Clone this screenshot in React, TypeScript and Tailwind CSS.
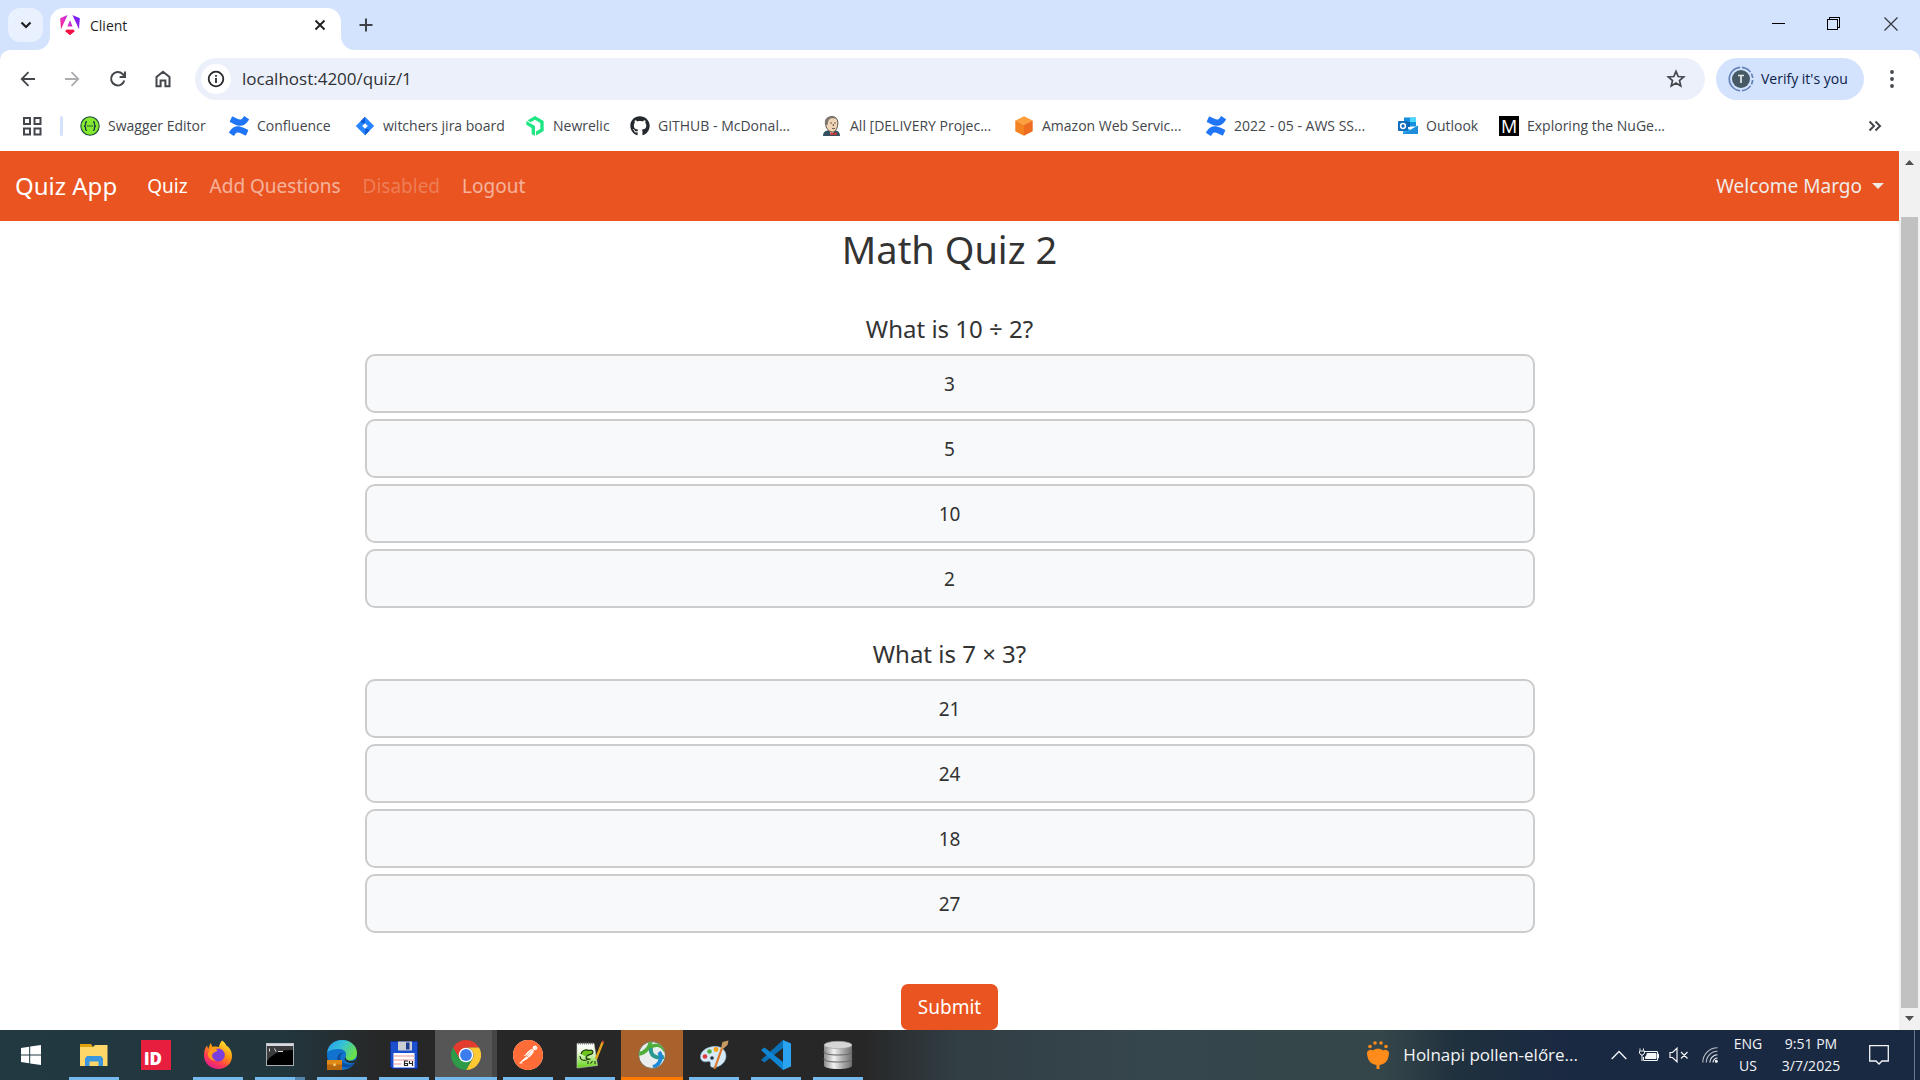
import React from "react";
import { FaGithub } from "react-icons/fa";
import { SiConfluence, SiNewrelic, SiPostman } from "react-icons/si";

/* ---------- Bookmark icons ---------- */

const AngularIcon = () => (
  <svg viewBox="0 0 20 20" className="size-5 shrink-0">
    <defs>
      <linearGradient id="ng" x1="0" y1="1" x2="1" y2="0.3">
        <stop offset="0" stopColor="#f0184e" />
        <stop offset="0.45" stopColor="#ee2ec4" />
        <stop offset="1" stopColor="#6e1cf7" />
      </linearGradient>
    </defs>
    <path
      fill="url(#ng)"
      d="M12.4 0 19.8 3.2 19 14.2ZM7.6 0 .2 3.2 1 14.2ZM14.6 16.2 10 19.9 5.4 16.2 6.3 14.7H13.7ZM7.4 11.6 10 5.3 12.6 11.6Z"
    />
    <path fill="#f5123f" d="M14.6 16.2 10 19.9 5.4 16.2 6.3 14.7H13.7Z" />
  </svg>
);

const SwaggerIcon = () => (
  <svg viewBox="0 0 20 20" className="size-5 shrink-0">
    <circle cx="10" cy="10" r="9.2" fill="#85ea2d" stroke="#1f4d3c" strokeWidth="1.1" />
    <g fill="none" stroke="#173647" strokeWidth="1.3">
      <path d="M7 5.6C5.4 5.6 5.6 6.8 5.6 8s-.2 1.8-1.4 2c1.2.2 1.4.8 1.4 2s-.2 2.4 1.4 2.4" />
      <path d="M13 5.6c1.6 0 1.4 1.2 1.4 2.4s.2 1.8 1.4 2c-1.2.2-1.4.8-1.4 2s.2 2.4-1.4 2.4" />
    </g>
    <g fill="#173647">
      <circle cx="7.9" cy="10" r=".8" />
      <circle cx="10" cy="10" r=".8" />
      <circle cx="12.1" cy="10" r=".8" />
    </g>
  </svg>
);

const ConfluenceIcon = () => <SiConfluence className="size-5 shrink-0 text-[#1f75f5]" />;

const JiraIcon = () => (
  <svg viewBox="0 0 20 20" className="size-5 shrink-0">
    <path d="M10 .8 19.2 10 10 19.2.8 10Z" fill="#2684ff" />
    <path d="M10 .8 5.9 5c0 2 1.6 2.6 4.1 2.2Z" fill="#0f5bd6" />
    <path d="M10 19.2 14.1 15c0-2-1.6-2.6-4.1-2.2Z" fill="#0f5bd6" />
    <path d="M10 7.2 12.8 10 10 12.8 7.2 10Z" fill="#fff" />
  </svg>
);

const NewrelicIcon = () => <SiNewrelic className="size-5 shrink-0 text-[#1ce783]" />;
const GithubIcon = () => <FaGithub className="size-5 shrink-0 text-[#24292f]" />;

const JenkinsIcon = () => (
  <svg viewBox="0 0 20 20" className="size-5 shrink-0">
    <path d="M1 20c0-3.5 1.5-5 4.5-5.5h8c3 .5 4.500 2 4.500 5.500Z" fill="#335061" />
    <path d="M7 13.5 9 19l4-4.5Z" fill="#fff" />
    <path d="M3.5 8C3 3 6 .6 10 .6s6.200 2.800 5.800 7.400c-.3 4.500-2.300 8-5.500 8S4 12.500 3.500 8Z" fill="#f0d6b7" stroke="#4a4038" strokeWidth=".9" />
    <path d="M3.200 9C1.800 3.500 5 .4 10 .4c3 0 4.600 1.200 5.300 2.800-3-1.200-6.300-1.500-8 .3-1.200 1.300-1.300 3-1.800 5.500Z" fill="#7d7970" />
    <path d="M8.300 7h1.600M12.300 7h1.500M10 12.200c1 .6 2 .6 3 0M11.300 8v2" stroke="#3b3029" strokeWidth=".9" fill="none" />
    <path d="m8.500 16 3 1.300 3-1.300v3.600l-3-1.200-3 1.200Z" fill="#d33833" />
  </svg>
);

const AwsIcon = () => (
  <svg viewBox="0 0 20 20" className="size-5 shrink-0">
    <path d="m10 .3 8.700 4.200L10 8.700 1.300 4.500Z" fill="#fba03c" />
    <path d="M1.300 4.500 10 8.700v11l-8.700-4.400Z" fill="#f58220" />
    <path d="M18.700 4.500 10 8.700v11l8.700-4.400Z" fill="#ee6b1f" />
  </svg>
);

const OutlookIcon = () => (
  <svg viewBox="0 0 20 20" className="size-5 shrink-0">
    <path d="M6 1.500h12v9H6Z" fill="#1490df" />
    <path d="M12 1.500h6v4.500h-6Z" fill="#50d9ff" />
    <path d="M6 6h6v5H6Z" fill="#0364b8" />
    <path d="M5 9.500 12.500 14 20 9.500V18H5Z" fill="#28a8ea" />
    <path d="m5 18 15-8.500V18Z" fill="#1f8fdc" />
    <rect x="0" y="5" width="10" height="10" rx="1" fill="#0f6cbd" />
    <circle cx="5" cy="10" r="2.4" fill="none" stroke="#fff" strokeWidth="1.5" />
  </svg>
);

const MediumIcon = () => (
  <span className="flex size-5 shrink-0 items-center justify-center bg-black text-lg leading-5 text-white">M</span>
);

const bookmarks = [
  { label: "Swagger Editor", icon: SwaggerIcon, width: "w-[121px]" },
  { label: "Confluence", icon: ConfluenceIcon, width: "w-[98px]" },
  { label: "witchers jira board", icon: JiraIcon, width: "w-[142px]" },
  { label: "Newrelic", icon: NewrelicIcon, width: "w-[77px]" },
  { label: "GITHUB - McDonal...", icon: GithubIcon, width: "w-[164px]" },
  { label: "All [DELIVERY Projec...", icon: JenkinsIcon, width: "w-[164px]" },
  { label: "Amazon Web Servic...", icon: AwsIcon, width: "w-[164px]" },
  { label: "2022 - 05 - AWS SS...", icon: ConfluenceIcon, width: "w-[164px]" },
  { label: "Outlook", icon: OutlookIcon, width: "w-[73px]" },
  { label: "Exploring the NuGe...", icon: MediumIcon, width: "w-[164px]" },
];

/* ---------- Browser chrome ---------- */

function TabStrip() {
  return (
    <div className="flex h-[50px] shrink-0 items-start bg-[#d3e2fd] text-[#1f1f1f]">
      <button aria-label="Search tabs" className="mt-2 ml-2 flex h-[34px] w-[35px] items-center justify-center rounded-xl bg-[#e9f0fe]">
        <svg viewBox="0 0 12 12" className="size-3" fill="none" stroke="currentColor" strokeWidth="2.2">
          <path d="m1.500 3.500 4.500 4.500 4.500-4.500" />
        </svg>
      </button>
      <div className="relative mt-2 ml-[7px] flex h-[42px] w-[291px] items-start rounded-t-[14px] bg-white pt-[7px] pr-[11px] pl-[10px]">
        <svg viewBox="0 0 14 14" className="absolute bottom-0 -left-[14px] size-[14px] fill-white">
          <path d="M14 0v14H0C8 14 14 8 14 0Z" />
        </svg>
        <svg viewBox="0 0 14 14" className="absolute -right-[14px] bottom-0 size-[14px] fill-white">
          <path d="M0 0v14h14C6 14 0 8 0 0Z" />
        </svg>
        <AngularIcon />
        <span className="ml-[10px] flex-1 text-[14px] leading-[22px]">Client</span>
        <button aria-label="Close tab" className="flex size-5 items-center justify-center">
          <svg viewBox="0 0 12 12" className="size-3" stroke="currentColor" strokeWidth="1.9">
            <path d="m1.500 1.500 9 9M10.500 1.500l-9 9" />
          </svg>
        </button>
      </div>
      <button aria-label="New tab" className="mt-[15px] ml-[15px] flex size-5 items-center justify-center">
        <svg viewBox="0 0 14 14" className="size-[14px]" stroke="#3f4247" strokeWidth="2">
          <path d="M7 .5v13M.5 7h13" />
        </svg>
      </button>
      <div className="ml-auto flex h-12 items-center text-black">
        <button aria-label="Minimize" className="flex h-full w-14 items-center justify-center">
          <svg viewBox="0 0 14 14" className="size-[14px]" stroke="currentColor" shapeRendering="crispEdges">
            <path d="M.5 6.500h13" />
          </svg>
        </button>
        <button aria-label="Restore" className="flex h-full w-14 items-center justify-center">
          <svg viewBox="0 0 14 14" className="size-[14px]" fill="none" stroke="currentColor" shapeRendering="crispEdges">
            <path d="M.5 2.500h10v10H.5ZM2.500 2V.5h10v10H11" />
          </svg>
        </button>
        <button aria-label="Close" className="flex h-full w-[58px] items-center justify-center">
          <svg viewBox="0 0 14 14" className="size-[14px]" stroke="#33373d" strokeWidth="1.2">
            <path d="m.5.5 13 13M13.500.5l-13 13" />
          </svg>
        </button>
      </div>
    </div>
  );
}

function Toolbar() {
  return (
    <div className="bg-[#d3e2fd]">
      <div className="flex h-[58px] items-center rounded-t-[10px] bg-white pl-[18px] text-[#43474c]">
        <button aria-label="Back" className="size-5">
          <svg viewBox="0 0 20 20" fill="none" stroke="currentColor" strokeWidth="1.8">
            <path d="M17 10H4M10.500 3.200 3.700 10l6.800 6.800" />
          </svg>
        </button>
        <button aria-label="Forward" className="ml-6 size-5 text-[#abadb0]">
          <svg viewBox="0 0 20 20" fill="none" stroke="currentColor" strokeWidth="1.8">
            <path d="M3 10h13M9.500 3.200l6.800 6.800-6.800 6.800" />
          </svg>
        </button>
        <button aria-label="Reload" className="ml-[26px] size-5">
          <svg viewBox="0 0 20 20" fill="none" stroke="currentColor" strokeWidth="2">
            <path d="M16.300 11.500A6.700 6.700 0 1 1 14.600 5l2.200 2.400" />
            <path d="M17 2.500v5.400h-5.400" />
          </svg>
        </button>
        <button aria-label="Home" className="ml-[25px] size-5">
          <svg viewBox="0 0 20 20" fill="none" stroke="currentColor" strokeWidth="2">
            <path d="M3.500 8 10 2.800 16.500 8v9.200H12.400v-5.700H7.600v5.700H3.500Z" />
          </svg>
        </button>
        <div className="ml-[22px] flex h-[42px] flex-1 items-center rounded-full bg-[#ecf0fa] pr-[19px] pl-[6px]">
          <button aria-label="View site information" className="flex size-[30px] items-center justify-center rounded-full bg-white">
            <svg viewBox="0 0 18 18" className="size-[18px]" fill="none" stroke="#26282b" strokeWidth="1.8">
              <circle cx="9" cy="9" r="7.3" />
              <path d="M9 8v5M9 5v1.800" />
            </svg>
          </button>
          <input
            aria-label="Address"
            defaultValue="localhost:4200/quiz/1"
            className="ml-[11px] flex-1 bg-transparent text-[17px] leading-6 text-[#2f3236] outline-none"
          />
          <button aria-label="Bookmark this tab" className="size-5">
            <svg viewBox="0 0 20 20" fill="none" stroke="currentColor" strokeWidth="1.7">
              <path d="m10 2.400 2.200 5.100 5.500.5-4.200 3.600 1.300 5.400-4.800-2.900L5.200 17l1.300-5.400L2.300 8l5.500-.5Z" />
            </svg>
          </button>
        </div>
        <button className="ml-[11px] flex h-[42px] w-[148px] items-center rounded-full bg-[#d3e2fd] pl-3 text-[#0b2149]">
          <svg viewBox="0 0 26 26" className="size-[26px]">
            <circle cx="13" cy="13" r="11.7" fill="none" stroke="#6383b8" strokeWidth="1.7" />
            <path d="M13 0v26M13 13 26 5M13 13l13 8M13 13h13" stroke="#d3e2fd" strokeWidth="1.8" />
            <circle cx="13" cy="13" r="9" fill="#455a64" />
            <path d="M10 9.500h6M13 9.500v7.500" stroke="#e6e9ea" strokeWidth="1.7" />
          </svg>
          <span className="ml-[7px] text-[14px] leading-5">Verify it's you</span>
        </button>
        <button aria-label="Menu" className="mr-[18px] ml-[18px] size-5">
          <svg viewBox="0 0 20 20" fill="currentColor">
            <circle cx="10" cy="3" r="1.9" />
            <circle cx="10" cy="10" r="1.9" />
            <circle cx="10" cy="17" r="1.9" />
          </svg>
        </button>
      </div>
    </div>
  );
}

function BookmarkBar() {
  return (
    <div className="flex h-[43px] shrink-0 items-start bg-white pt-2 pl-[23px] text-[14px] leading-5 text-[#43474c]">
      <button aria-label="Apps" className="size-5">
        <svg viewBox="0 0 20 20" fill="none" stroke="currentColor" strokeWidth="2">
          <path d="M1 2h6v6H1ZM11.500 2h6v6h-6ZM1 12.500h6v6H1ZM11.500 12.500h6v6h-6Z" />
        </svg>
      </button>
      <span className="mr-[17px] ml-[17px] h-5 w-[3px] rounded bg-[#d3e2fd]" />
      {bookmarks.map(({ label, icon: Icon, width }) => (
        <a key={label} href="#" className="flex gap-2">
          <Icon />
          <span className={`${width} whitespace-nowrap`}>{label}</span>
        </a>
      ))}
      <button aria-label="More bookmarks" className="mr-[35px] ml-auto size-5">
        <svg viewBox="0 0 20 20" fill="none" stroke="currentColor" strokeWidth="2">
          <path d="m4.500 5.500 4.500 4.500-4.500 4.500M10.500 5.500l4.500 4.500-4.500 4.500" />
        </svg>
      </button>
    </div>
  );
}

/* ---------- Quiz page ---------- */

const questions = [
  { text: "What is 10 ÷ 2?", answers: ["3", "5", "10", "2"] },
  { text: "What is 7 × 3?", answers: ["21", "24", "18", "27"] },
];

function QuizPage() {
  return (
    <div className="flex min-w-0 flex-1 flex-col overflow-hidden bg-white text-[#333]">
      <nav className="flex h-[70px] shrink-0 items-center gap-[22px] bg-[#e95420] px-[15px] text-[19px] leading-[30px] text-white">
        <a href="#" className="mr-2 text-[24px]">Quiz App</a>
        <a href="#">Quiz</a>
        <a href="#" className="text-white/55">Add Questions</a>
        <a href="#" aria-disabled="true" className="text-white/25">Disabled</a>
        <a href="#" className="text-white/55">Logout</a>
        <button className="ml-auto flex items-center gap-[10px] text-[#f0ebe9]">
          Welcome Margo
          <svg viewBox="0 0 12 6" className="h-[6px] w-3 fill-current">
            <path d="M0 0h12L6 6Z" />
          </svg>
        </button>
      </nav>
      <main className="mx-auto w-full max-w-[1170px] pt-1 text-center">
        <h1 className="mb-[10px] text-[38px] leading-[48px]">Math Quiz 2</h1>
        <form onSubmit={(e) => e.preventDefault()}>
          {questions.map((q) => (
            <section key={q.text} className="pt-[31px]">
              <h2 className="mb-[10px] text-[24px] leading-[30px]">{q.text}</h2>
              <div className="flex flex-col gap-[6px]">
                {q.answers.map((a) => (
                  <button key={a} type="button" className="h-[59px] rounded-[10px] border-2 border-[#ccc] bg-[#f8f9fb] text-[19px] leading-[30px]">
                    {a}
                  </button>
                ))}
              </div>
            </section>
          ))}
          <button type="submit" className="mt-[51px] h-[46px] rounded-[7px] bg-[#e95420] px-[17px] text-[19px] leading-[30px] text-white">
            Submit
          </button>
        </form>
      </main>
    </div>
  );
}

function Scrollbar() {
  return (
    <div className="flex w-[21px] shrink-0 flex-col items-center bg-[#f1f1f1]">
      <svg viewBox="0 0 9 5" className="mt-[9px] h-[5px] w-[9px] fill-[#505050]">
        <path d="M0 5h9L4.500 0Z" />
      </svg>
      <div className="mt-[52px] mb-2 w-[17px] flex-1 bg-[#c1c1c1]" />
      <svg viewBox="0 0 9 5" className="mb-[9px] h-[5px] w-[9px] fill-[#505050]">
        <path d="M0 0h9L4.500 5Z" />
      </svg>
    </div>
  );
}

/* ---------- Taskbar ---------- */

const FolderIcon = () => (
  <svg viewBox="0 0 30 30" className="size-[30px]">
    <path d="M1 4h11l2 3v4H1Z" fill="#e2a20c" />
    <path d="M1 7h13l2-2h12.500v21H1Z" fill="#ffd768" />
    <path d="M6 26V18.500L8 16h14l2 2.500V26h-4.500v-4.500h-9V26Z" fill="#3a96dd" />
  </svg>
);

const IdIcon = () => (
  <span className="flex size-[30px] items-end bg-[#e81e3f] pb-px pl-[3px] text-[17px] leading-5 font-extrabold text-white">
    iD
  </span>
);

const FirefoxIcon = () => (
  <svg viewBox="0 0 30 30" className="size-[30px]">
    <defs>
      <linearGradient id="fx" x1=".8" y1="0" x2=".2" y2="1">
        <stop offset="0" stopColor="#ffe93b" />
        <stop offset=".4" stopColor="#ff980e" />
        <stop offset=".7" stopColor="#ff3c4e" />
        <stop offset="1" stopColor="#d9179b" />
      </linearGradient>
    </defs>
    <path
      d="M19 .5c2.500 1.500 3.800 3.500 4.200 5 3.500 2 5.800 6 5.800 10.500C29 23.500 23 29 15.300 29S1 23.500 1 15.500C1 10.500 2 8 4 5.500L5.200 9 7.500 3l2.200 4c2.500-.6 4.300-.5 6 .2 1-2.700 1.300-4.200 3.300-6.700Z"
      fill="url(#fx)"
    />
    <circle cx="15.3" cy="15" r="6.5" fill="#7a3fdc" />
    <path d="M7 9c3-2 6-.5 7.500 1.500-1 1.500-3.500 1.200-5 3.500-1.200 2.500.5 5.500 3.500 6.500-5 1-8.500-3-8-7Z" fill="#ff9a1e" />
  </svg>
);

const TerminalIcon = () => (
  <svg viewBox="0 0 30 30" className="size-[30px]">
    <rect x="1.500" y="3.500" width="27" height="22" fill="#000" stroke="#a9adb1" />
    <rect x="1.500" y="3.500" width="27" height="2.500" fill="#d6dade" />
    <path d="M2 6h26v4C16 10 8 13 2 21Z" fill="#3a3c3e" />
    <path d="M4.500 8.500v3M9.500 8.500l1.500 3M13 11.500h5" stroke="#ddd" />
  </svg>
);

const EdgeIcon = () => (
  <svg viewBox="0 0 30 30" className="size-[30px]">
    <defs>
      <linearGradient id="edge-top" x1="0" y1="0" x2="1" y2=".5">
        <stop offset="0" stopColor="#2496e8" />
        <stop offset=".5" stopColor="#35c1d8" />
        <stop offset="1" stopColor="#6ae04a" />
      </linearGradient>
    </defs>
    <circle cx="15" cy="15" r="15" fill="#1173cf" />
    <path d="M0 13C1 5 7 0 15 0c9 0 15 6 15 13 0 5-3.500 7.500-7.500 7.500-3.500 0-5-1.500-4-3.500 2-4-1-8-6-8C6.500 9 2 10 0 13Z" fill="url(#edge-top)" />
    <path d="M10.500 17C9 24 15 28 20 27.500c3-.3 5.500-1.500 7.500-4-2 1-5 1.500-8 .5-4-1.300-7-4-6-8 .5-2 2-3 3.500-3-3-1-5.500.5-6.500 4Z" fill="#0a4f9e" />
    <path d="M19 16c-1 2.500 1 5 5 5 2.500 0 4.500-1 6-3v6l-3-1c-3 1-8 0-9.500-4Z" fill="#223238" />
    <rect x="0" y="20" width="15" height="10" fill="#b8690e" />
    <rect x="0" y="20" width="15" height="4.500" fill="#e08a15" />
    <rect x="6.500" y="23.500" width="2" height="2.500" fill="#ffe08a" />
  </svg>
);

const FloppyIcon = () => (
  <svg viewBox="0 0 30 30" className="size-[30px]">
    <path d="M1.500 1.500h27v27h-25l-2-2Z" fill="#1b4fd0" stroke="#0e2e91" />
    <rect x="9" y="1.500" width="14" height="9" fill="#c9ccd0" />
    <rect x="17" y="2.500" width="3.500" height="7" fill="#1b3b8f" />
    <rect x="4.500" y="13" width="21" height="14.500" fill="#fff" />
    <path d="M4.500 16h21M4.500 20h21M4.500 24h8" stroke="#f3b9b9" strokeWidth="1.500" />
    <path d="M19 21h-3.500v4.500H18.500V23.500h-3M20.500 21v2.500h3.500M23.500 21v5" fill="none" stroke="#222" strokeWidth="1.200" />
  </svg>
);

const ChromeIcon = () => (
  <svg viewBox="0 0 30 30" className="size-[30px]">
    <path d="M15 0a15 15 0 0 1 13 7.500H15L8.500 18.750 2 7.500A15 15 0 0 1 15 0Z" fill="#e33b2e" />
    <path d="M28 7.500A15 15 0 0 1 15 30l6.500-11.250A7.500 7.500 0 0 0 15 7.500Z" fill="#fcc934" />
    <path d="M2 7.500A15 15 0 0 0 15 30l6.500-11.250H8.500Z" fill="#2d9a48" />
    <circle cx="15" cy="15" r="7.300" fill="#fff" />
    <circle cx="15" cy="15" r="5.900" fill="#3b7ded" />
  </svg>
);

const PostmanIcon = () => (
  <span className="flex size-[30px] rounded-full bg-white p-px">
    <SiPostman className="-m-px size-[30px] shrink-0 text-[#ff6c37]" />
  </span>
);

const NotepadIcon = () => (
  <svg viewBox="0 0 30 30" className="size-[30px]">
    <defs>
      <linearGradient id="npp" x1="0" y1="0" x2="0" y2="1">
        <stop offset="0" stopColor="#fff" />
        <stop offset=".35" stopColor="#eefbe0" />
        <stop offset="1" stopColor="#5fd30e" />
      </linearGradient>
    </defs>
    <path d="M2 3.500h17l3.500 22L2 28Z" fill="url(#npp)" stroke="#c7cdc2" strokeWidth=".6" />
    <path d="M3 3.500h15" stroke="#777" strokeWidth="2" strokeDasharray="1 1" />
    <path d="M6 14c1-4 5-5 8-3.500 3-1 5 .5 3.500 3-2 1.500-4.500 1-6 3s1 3.500 4 2.500" fill="#6cc51c" stroke="#23360f" strokeWidth="1.200" />
    <path d="M5 16c0 4 3 5 7 4M13 21v3M15.500 23.500l2-2.500M20 21v3" fill="none" stroke="#23360f" strokeWidth="1.100" />
    <path d="M27.500 2.500 21 19" stroke="#e3a21a" strokeWidth="2.400" />
    <path d="m28.300 1-.8 2" stroke="#c84a3a" strokeWidth="2.400" />
  </svg>
);

const CiscoIcon = () => (
  <svg viewBox="0 0 30 30" className="size-[30px]">
    <defs>
      <clipPath id="globe">
        <circle cx="15" cy="15" r="13" />
      </clipPath>
    </defs>
    <circle cx="15" cy="15" r="13.400" fill="#e9eded" stroke="#6b5a48" strokeWidth=".8" />
    <g clipPath="url(#globe)" fill="none">
      <path d="M1 14C8 13 13 8 14 0" stroke="#4fae3a" strokeWidth="4" />
      <path d="M13 8c5-5 12-3 15 3" stroke="#4fae3a" strokeWidth="3.500" />
      <path d="M14 8c-1 7 4 11 13 9" stroke="#2b9a8c" strokeWidth="4" />
      <path d="M22 12c4 5 1 13-6 15" stroke="#1e8ad6" strokeWidth="4" />
    </g>
  </svg>
);

const PaintIcon = () => (
  <svg viewBox="0 0 30 30" className="size-[30px]">
    <path
      d="M14 6.500c7-1 13 3 13 9.500 0 6-5.500 11-12 11.500-3 .2-4-1.500-3.500-3.500.4-2-1-3-3-2.500-3 .8-6.500 0-7-4C1 11.500 7 7.500 14 6.500Z"
      fill="#d6e9f7"
      stroke="#8bb3d1"
      strokeWidth=".6"
    />
    <circle cx="6" cy="16.500" r="2.300" fill="#e0393e" />
    <circle cx="10.500" cy="11.500" r="2.300" fill="#4caf3c" />
    <circle cx="17" cy="9.500" r="2.400" fill="#f4a31c" />
    <circle cx="13" cy="18" r="1.800" fill="#24333d" />
    <path d="M15.500 29 23 8" stroke="#d9772b" strokeWidth="2.200" />
    <path d="M22 8 23.500 2l6-1.500-1 4.500-4.500 4Z" fill="#c79a63" />
  </svg>
);

const VsCodeIcon = () => (
  <svg viewBox="0 0 30 30" className="size-[30px]">
    <path d="M22 0 30 3.500V26.500L22 30Z" fill="#2aa4f0" />
    <path d="M22 0v8L3.500 22.500 0 20Z" fill="#0b72b8" />
    <path d="M22 30v-8L3.500 7.500 0 10Z" fill="#0e86d4" />
  </svg>
);

const DatabaseIcon = () => (
  <svg viewBox="0 0 30 30" className="size-[30px]">
    <defs>
      <linearGradient id="db">
        <stop offset="0" stopColor="#8a8a8a" />
        <stop offset=".35" stopColor="#f2f2f2" />
        <stop offset=".7" stopColor="#a5a5a5" />
        <stop offset="1" stopColor="#6f6f6f" />
      </linearGradient>
    </defs>
    <path d="M1 5.500v20c0 2 6 3.500 14 3.500s14-1.500 14-3.500v-20Z" fill="url(#db)" />
    <path d="M1 11.500C1 14 7 15 15 15s14-1 14-3.500M1 18.500C1 21 7 22 15 22s14-1 14-3.500" fill="none" stroke="#6b6b6b" strokeWidth="1.100" />
    <ellipse cx="15" cy="5" rx="14" ry="3.700" fill="#d5d5d5" stroke="#9b9b9b" strokeWidth=".6" />
  </svg>
);

const tasks = [
  { name: "File Explorer", icon: FolderIcon, cell: "px-[6px]", bar: "bg-[#76b9ed]" },
  { name: "iD", icon: IdIcon, cell: "px-[6px]", bar: "bg-transparent" },
  { name: "Firefox", icon: FirefoxIcon, cell: "px-[6px]", bar: "bg-[#76b9ed]" },
  { name: "Command Prompt", icon: TerminalIcon, cell: "px-[6px]", bar: "bg-linear-to-r from-[#76b9ed] from-80% to-[#5485ac] to-80%" },
  { name: "Edge", icon: EdgeIcon, cell: "px-[6px]", bar: "bg-[#76b9ed]" },
  { name: "Total Commander", icon: FloppyIcon, cell: "px-[6px]", bar: "bg-[#76b9ed]" },
  { name: "Chrome", icon: ChromeIcon, cell: "bg-linear-to-r from-[#565656] from-92% to-[#464646] to-92%", bar: "bg-[#76b9ed]" },
  { name: "Postman", icon: PostmanIcon, cell: "px-[6px]", bar: "bg-[#76b9ed]" },
  { name: "Notepad++", icon: NotepadIcon, cell: "px-[6px]", bar: "bg-[#76b9ed]" },
  { name: "Secure Client", icon: CiscoIcon, cell: "bg-[#a9622b]", bar: "bg-[#ff7a00]" },
  { name: "Paint", icon: PaintIcon, cell: "px-[6px]", bar: "bg-[#76b9ed]" },
  { name: "Visual Studio Code", icon: VsCodeIcon, cell: "px-[6px]", bar: "bg-[#76b9ed]" },
  { name: "Database", icon: DatabaseIcon, cell: "px-[6px]", bar: "bg-[#76b9ed]" },
];

function Taskbar() {
  return (
    <footer className="flex h-[50px] shrink-0 [background-image:linear-gradient(90deg,#223941_0%,#22363d_15%,#272727_20%,#272727_45%,#323f45_50%,#35464c_60%,#35464a_72%,#1f303e_76%,#1a2942_82%,#1a2942_100%)]">
      <button aria-label="Start" className="flex h-[50px] w-[61px] shrink-0 items-center justify-center">
        <svg viewBox="0 0 20 20" className="size-5 fill-white">
          <path d="M0 3 8.200 1.800V9.500H0ZM9.200 1.600 20 0v9.500H9.200ZM0 10.500h8.200v7.800L0 17.100ZM9.200 10.500H20V20L9.200 18.400Z" />
        </svg>
      </button>
      <div className="ml-[2px] flex">
        {tasks.map(({ name, icon: Icon, cell, bar }) => (
          <button key={name} aria-label={name} className={`flex h-[50px] w-[62px] flex-col items-center ${cell}`}>
            <span className="flex flex-1 items-center pt-[3px]">
              <Icon />
            </span>
            <span className={`h-[3px] w-full ${bar}`} />
          </button>
        ))}
      </div>
      <div className="ml-auto flex items-center text-[14px] text-[#f2f4f6]">
        <button className="flex items-center gap-[14px] text-[17px] leading-6">
          <svg viewBox="0 0 22 28" className="h-7 w-[22px] fill-[#ff8c1a]">
            <path d="M0 11.500c1-2.500 4-3.500 6-2 2-2.500 8-2.500 10 0 2-1.500 5-.5 6 2 0 7-3.500 12-9.500 12.500V28h-3v-4C3.500 23.500 0 18.500 0 11.500Z" />
            <circle cx="8" cy="2" r="1.800" />
            <circle cx="14" cy="2" r="1.800" />
            <circle cx="3" cy="5.500" r="1.800" />
            <circle cx="19" cy="5.500" r="1.800" />
          </svg>
          Holnapi pollen-előre...
        </button>
        <button aria-label="Show hidden icons" className="ml-[33px] w-4">
          <svg viewBox="0 0 16 10" fill="none" stroke="currentColor" strokeWidth="1.400">
            <path d="m.7 9 7.300-7.500L15.300 9" />
          </svg>
        </button>
        <svg viewBox="0 0 20 14" className="ml-3 h-[14px] w-5" fill="none" stroke="currentColor">
          <path d="M6 3.500h12.500v9h-14V9M18.500 6h1v4h-1" />
          <path d="M8 5.500h9v5H6.500V9L8 7Z" fill="currentColor" />
          <path d="M1 .5v2M4.500.5v2M.5 3h5v2L4 7H2L.5 5ZM3 7v6" />
        </svg>
        <svg viewBox="0 0 20 16" className="ml-[10px] h-4 w-5" fill="none" stroke="currentColor" strokeWidth="1.200">
          <path d="M1 5.500h2.500L8 1.200v13.600L3.500 10.500H1ZM12 5l6.500 6.500M18.500 5 12 11.500" />
        </svg>
        <svg viewBox="0 0 16 16" className="ml-[13px] size-4" fill="none" stroke="currentColor" strokeWidth="1.100">
          <path d="M.8 15.500A14.700 14.700 0 0 1 15.500.8M4.300 15.500A11.200 11.200 0 0 1 15.500 4.300" opacity=".75" />
          <path d="M7.800 15.500a7.700 7.700 0 0 1 7.700-7.700M11 15.500a4.500 4.500 0 0 1 4.500-4.500" />
          <circle cx="14.300" cy="14.300" r="1" fill="currentColor" />
        </svg>
        <div className="ml-[15px] w-[30px] text-center leading-[22px]">
          ENG
          <br />
          US
        </div>
        <div className="ml-[17px] w-[62px] text-center leading-[22px] whitespace-nowrap">
          9:51 PM
          <br />
          3/7/2025
        </div>
        <button aria-label="Notifications" className="mr-[25px] ml-[27px] w-5">
          <svg viewBox="0 0 20 20" fill="none" stroke="currentColor" strokeWidth="1.300">
            <path d="M.7.7h18.600v15.300H13L10 19l-3-3H.7Z" />
          </svg>
        </button>
        <span className="h-full w-[6px] border-l border-[#6b7686]" />
      </div>
    </footer>
  );
}

export default function App() {
  return (
    <div className="flex h-screen flex-col overflow-hidden bg-white font-['Open_Sans','Noto_Sans',sans-serif]">
      <header className="shrink-0">
        <TabStrip />
        <Toolbar />
        <BookmarkBar />
      </header>
      <div className="flex min-h-0 flex-1 font-['Noto_Sans',sans-serif]">
        <QuizPage />
        <Scrollbar />
      </div>
      <Taskbar />
    </div>
  );
}
